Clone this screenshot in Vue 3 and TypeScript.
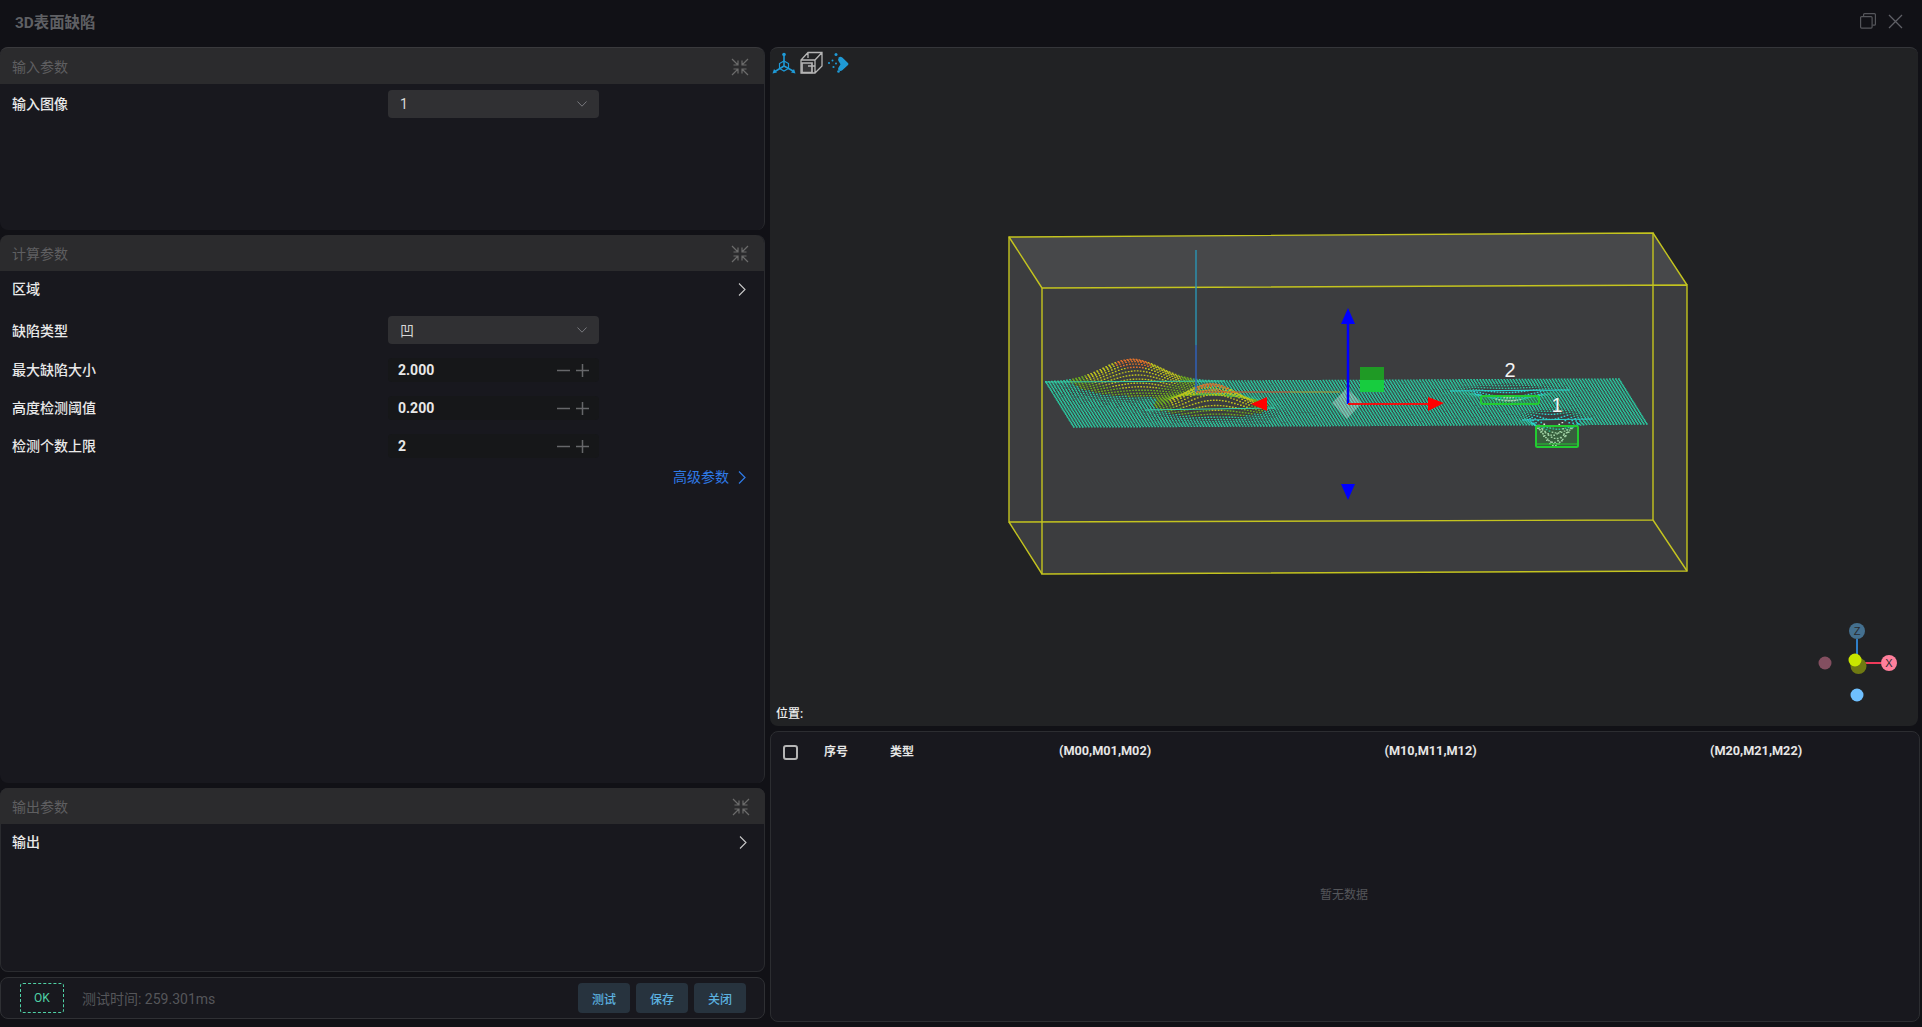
<script setup lang="ts">
type Row = { label: string; value: string };
const inputs: Row[] = [
  { label: '最大缺陷大小', value: '2.000' },
  { label: '高度检测阈值', value: '0.200' },
  { label: '检测个数上限', value: '2' },
];
const columns = ['(M00,M01,M02)', '(M10,M11,M12)', '(M20,M21,M22)'];

const g = (x: number, c: number, s: number) => Math.exp(-((x - c) * (x - c)) / (2 * s * s));
const bumps = [
  [0.15, 0.04, 0.05, 0.16, 23],
  [0.26, 0.6, 0.045, 0.11, 24],
  [0.845, 0.87, 0.02, 0.07, -27],
  [0.797, 0.25, 0.036, 0.05, -10],
];
const buckets: Record<string, string[]> = {
  '#2bc79f': [], '#6fb21e': [], '#bfc41c': [], '#e0702a': [], '#2bd6d0': [], '#dbe8dc': [],
};
const NU = 190;
const NV = 32;
for (let j = 0; j <= NV; j++) {
  for (let i = 0; i <= NU; i++) {
    const u = i / NU;
    const v = j / NV;
    let h = 0;
    for (const b of bumps) h += b[4] * g(u, b[0], b[2]) * g(v, b[1], b[3]);
    const x = 1045 + u * 573 + v * 28;
    const y = 382 - u * 3 + v * 45 - h;
    const col = h > 19 ? '#e0702a' : h > 6 ? '#bfc41c' : h > 2.2 ? '#6fb21e' : h > -2 ? '#2bc79f' : h > -8 ? '#2bd6d0' : '#dbe8dc';
    buckets[col].push(`M${x.toFixed(1)} ${y.toFixed(1)}h1.7`);
  }
}
const meshes = Object.keys(buckets).map((c) => ({ color: c, d: buckets[c].join('') }));
const COLLAPSE = 'M1 1l6 6M7 2.5V7H2.5M17 1l-6 6M11 2.5V7h4.5M1 17l6-6M7 15.5V11H2.5M17 17l-6-6M11 15.5V11h4.5';
const CHEV = 'M1 .5l6 6-6 6';
const DOWN = 'M.5 .5L5 5.2l4.5-4.7';
</script>

<template>
  <div class="app">
    <header class="titlebar">
      <span class="title">3D表面缺陷</span>
      <div class="winbtns">
        <svg width="16" height="16" viewBox="0 0 16 16" fill="none" stroke="#55565b" stroke-width="1.2"><rect x="0.6" y="3.6" width="11.5" height="11.5" rx="1" /><path d="M3.6 3.4V1.6q0-1 1-1h9.8q1 0 1 1v9.6q0 1-1 1h-2" /></svg>
        <svg width="15" height="15" viewBox="0 0 15 15" fill="none" stroke="#5f6066" stroke-width="1.3"><path d="M1 1l13 13M14 1L1 14" /></svg>
      </div>
    </header>

    <div class="main">
      <div class="left">
        <section class="panel p1">
          <div class="phead">
            <span>输入参数</span>
            <svg class="collapse" width="18" height="18" viewBox="0 0 18 18" fill="none" stroke="#6b6b6b" stroke-width="1.2"><path :d="COLLAPSE" /></svg>
          </div>
          <div class="formrow first">
            <label>输入图像</label>
            <div class="select"><span>1</span><svg width="10" height="6" viewBox="0 0 10 6" fill="none" stroke="#77787c"><path :d="DOWN" /></svg></div>
          </div>
        </section>

        <section class="panel p2">
          <div class="phead">
            <span>计算参数</span>
            <svg class="collapse" width="18" height="18" viewBox="0 0 18 18" fill="none" stroke="#6b6b6b" stroke-width="1.2"><path :d="COLLAPSE" /></svg>
          </div>
          <div class="linkrow">
            <label>区域</label>
            <svg width="8" height="13" viewBox="0 0 8 13" fill="none" stroke="#c8c8c8" stroke-width="1.1"><path :d="CHEV" /></svg>
          </div>
          <div class="formrow second">
            <label>缺陷类型</label>
            <div class="select"><span>凹</span><svg width="10" height="6" viewBox="0 0 10 6" fill="none" stroke="#77787c"><path :d="DOWN" /></svg></div>
          </div>
          <div v-for="r in inputs" :key="r.label" class="formrow inputrow">
            <label>{{ r.label }}</label>
            <div class="numinput">
              <span class="val">{{ r.value }}</span>
              <span class="steppers">
                <svg width="13" height="13" viewBox="0 0 13 13" stroke="#66676a" stroke-width="1.5"><path d="M0 6.5h13" /></svg>
                <svg width="13" height="13" viewBox="0 0 13 13" stroke="#66676a" stroke-width="1.5"><path d="M0 6.5h13M6.5 0v13" /></svg>
              </span>
            </div>
          </div>
          <div class="advanced">
            <span>高级参数</span>
            <svg width="8" height="13" viewBox="0 0 8 13" fill="none" stroke="#2f7be8" stroke-width="1.2"><path :d="CHEV" /></svg>
          </div>
        </section>

        <section class="panel p3">
          <div class="phead">
            <span>输出参数</span>
            <svg class="collapse" width="18" height="18" viewBox="0 0 18 18" fill="none" stroke="#6b6b6b" stroke-width="1.2"><path :d="COLLAPSE" /></svg>
          </div>
          <div class="linkrow">
            <label>输出</label>
            <svg width="8" height="13" viewBox="0 0 8 13" fill="none" stroke="#c8c8c8" stroke-width="1.1"><path :d="CHEV" /></svg>
          </div>
        </section>

        <footer class="statusbar">
          <div class="ok">OK</div>
          <span class="time">测试时间: 259.301ms</span>
          <div class="btns">
            <button>测试</button>
            <button>保存</button>
            <button>关闭</button>
          </div>
        </footer>
      </div>

      <div class="right">
        <section class="viewer">
          <svg class="scene" viewBox="770 47 1148 679" width="1148" height="679">
            <polygon points="1009,237 1653,233 1687,285 1687,571 1042,574 1009,522" fill="#3c3d3f" />
            <polygon points="1009,237 1653,233 1687,285 1042,288" fill="#47484a" />
            <g fill="none" stroke="#c4c41f" stroke-width="1.4">
              <path d="M1009 237L1653 233L1653 520L1009 522Z" />
              <path d="M1042 288L1687 285L1687 571L1042 574Z" />
              <path d="M1009 237L1042 288M1653 233L1687 285M1653 520L1687 571M1009 522L1042 574" />
            </g>
            <path v-for="m in meshes" :key="m.color" :d="m.d" :stroke="m.color" stroke-width="1.4" fill="none" />
            <path d="M1045 382L1225 381" stroke="#35d3ab" stroke-width="1.1" fill="none" />
            <path d="M1145 410L1275 408" stroke="#35d3ab" stroke-width="1.1" fill="none" />
            <path d="M1450 391L1570 390M1522 420L1592 419" stroke="#2bd6d0" stroke-width="1.1" fill="none" />
            <path d="M1196 250V345" stroke="#2a94b4" stroke-width="1.4" />
            <path d="M1196 345V392" stroke="#2f63c0" stroke-width="1.4" />
            <path d="M1196 392H1290" stroke="#e0502a" stroke-width="1.2" />
            <path d="M1290 392H1340" stroke="#b89a30" stroke-width="1.2" />
            <polygon points="1347,388 1362,403 1347,419 1332,403" fill="#fff" fill-opacity="0.3" />
            <rect x="1360" y="367" width="24" height="13" fill="#1f9a25" />
            <rect x="1360" y="380" width="24" height="12" fill="#17cc3f" />
            <path d="M1348 404V322" stroke="#0000ff" stroke-width="2.5" />
            <polygon points="1348,308 1341,324 1355,324" fill="#0000ff" />
            <polygon points="1341,484 1355,484 1348,500" fill="#0000ff" />
            <path d="M1348 404H1430" stroke="#f01010" stroke-width="2" />
            <polygon points="1444,403 1428,397 1428,411" fill="#ff0000" />
            <polygon points="1251,404 1267,397 1267,411" fill="#ff0000" />
            <rect x="1481" y="396" width="58" height="8" rx="2" fill="#2a9a3a" fill-opacity="0.3" stroke="#22cc30" stroke-width="2" />
            <rect x="1536" y="426" width="42" height="21" rx="1.5" fill="#2fa03a" fill-opacity="0.35" stroke="#22cc30" stroke-width="2" />
            <path d="M1537 444H1578" stroke="#22cc30" stroke-width="1.2" />
            <text x="1510" y="377" class="num">2</text>
            <text x="1557" y="412" class="num">1</text>
            <path d="M1857 639V656" stroke="#2f7fc8" stroke-width="2" />
            <path d="M1860 663H1881" stroke="#f03a5a" stroke-width="2" />
            <circle cx="1825" cy="663" r="6.5" fill="#834f60" />
            <circle cx="1857" cy="695" r="6.5" fill="#6fc0ff" />
            <circle cx="1858.5" cy="666" r="8" fill="#6f7a12" />
            <circle cx="1855" cy="660" r="6.5" fill="#c8e600" />
            <circle cx="1857" cy="631" r="8" fill="#44708f" />
            <circle cx="1889" cy="663" r="8" fill="#ff7f9b" />
            <text x="1857" y="635" class="axis">Z</text>
            <text x="1889" y="667" class="axis">X</text>
          </svg>

          <div class="tools">
            <svg width="24" height="24" viewBox="772 50 24 24" fill="none" stroke="#1f9ad6" stroke-width="1.6"><path d="M784 55V66L775 71.5M784 66l10 5.5" /><path d="M784 61l4.5 2.5v5L784 71l-4.5-2.5v-5z" stroke-width="1.2" /><circle cx="784" cy="54.5" r="1.8" fill="#1f9ad6" stroke="none" /><path d="M772.5 73.5l1.5-4.5 3 3.5zM795.5 73.5l-1.5-4.5-3 3.5z" fill="#1f9ad6" stroke="none" /></svg>
            <svg width="28" height="24" viewBox="796 50 28 24" fill="none" stroke="#b5b5b5" stroke-width="1.3"><path d="M808 52.5H822V66L815 73H801V60zM801 60H815V73M815 60L822 52.5M808 52.5V58M808 66H815" /><path d="M802 63H812V72.5H802z" stroke-width="1.7" fill="#b5b5b5" fill-opacity="0.12" /></svg>
            <svg width="24" height="24" viewBox="826 50 24 24" fill="#1f9ad6"><path d="M838.5 57.5q2-1.5 3.8 0L848 63q1 1 0 2l-5.7 5.3q-1.8 1.5-3.8 0-1-1.3 0-2.8l2-3.2-2-3.2q-1-1.3 0-2.6z" /><circle cx="829" cy="63" r="1.1" /><circle cx="836" cy="54.5" r="1.5" /><circle cx="832.5" cy="60.5" r="1" /><circle cx="833.5" cy="67" r="1.1" /><circle cx="836" cy="63.5" r="1" /><circle cx="838.5" cy="71.5" r="1.3" /></svg>
          </div>
          <div class="pos">位置:</div>
        </section>

        <section class="table">
          <div class="thead">
            <span class="check"></span>
            <span class="th idx">序号</span>
            <span class="th type">类型</span>
            <span v-for="c in columns" :key="c" class="th mat">{{ c }}</span>
          </div>
          <div class="empty">暂无数据</div>
        </section>
      </div>
    </div>
  </div>
</template>

<style>
html, body { margin: 0; padding: 0; background: #111116; overflow: hidden; }
</style>

<style scoped>
.app {
  width: 1922px;
  height: 1027px;
  background: #111116;
  display: flex;
  flex-direction: column;
  font-family: Roboto, "Noto Sans CJK SC", sans-serif;
  font-size: 14px;
  color: #e8e8e8;
}
.titlebar {
  height: 47px;
  flex: none;
  display: flex;
  align-items: center;
  justify-content: space-between;
  padding: 0 19px 5px 15px;
  box-sizing: border-box;
}
.title { font-size: 15.4px; font-weight: 700; color: #5f6064; }
.winbtns { display: flex; align-items: center; gap: 12px; }
.main { flex: 1; display: flex; gap: 5px; min-height: 0; }
.left { width: 765px; flex: none; display: flex; flex-direction: column; gap: 5px; }
.panel {
  background: #18181e;
  border-radius: 8px;
  box-shadow: inset 0 0 0 1px #2a2b2f;
  display: flex;
  flex-direction: column;
  box-sizing: border-box;
}
.p1 { height: 183px; box-shadow: none; border-right: 1px solid #2a2b2f; }
.p2 { height: 548px; box-shadow: none; border-right: 1px solid #2a2b2f; }
.p3 { height: 184px; }
.phead {
  height: 37px;
  flex: none;
  background: #2b2b2d;
  border-radius: 8px 8px 0 0;
  display: flex;
  align-items: center;
  justify-content: space-between;
  padding: 0 15px 0 12px;
  color: #5f5f61;
  border-top: 1px solid #3a3a3d;
  box-sizing: border-box;
}
.phead .collapse { margin-top: 2px; }
.p2 .phead, .p3 .phead { height: 36px; border-top: 0; }
label { font-weight: 500; color: #e9e9e9; margin-bottom: 2px; }
.formrow { display: flex; align-items: center; padding-left: 12px; }
.formrow label { width: 376px; flex: none; }
.second label { margin-bottom: 0; }
.first { margin-top: 6px; }
.second { margin-top: 9px; }
.select {
  width: 211px;
  height: 28px;
  background: #303033;
  border-radius: 4px;
  display: flex;
  align-items: center;
  justify-content: space-between;
  padding: 0 12px;
  box-sizing: border-box;
  color: #d8d8d8;
}
.inputrow { margin-top: 14px; }
.numinput {
  width: 211px;
  height: 24px;
  background: #161719;
  border-radius: 4px;
  display: flex;
  align-items: center;
  justify-content: space-between;
  padding: 0 10px;
  box-sizing: border-box;
}
.val { font-weight: 700; color: #e8e8e8; }
.inputrow:last-of-type .val { padding-left: 2px; }
.steppers { display: flex; gap: 6px; align-items: center; }
.linkrow {
  height: 36px;
  flex: none;
  display: flex;
  align-items: center;
  justify-content: space-between;
  padding: 0 18px 0 12px;
}
.advanced {
  margin-top: 9px;
  display: flex;
  justify-content: flex-end;
  align-items: center;
  gap: 9px;
  padding-right: 18px;
  color: #2f7be8;
  line-height: 20px;
}
.statusbar {
  height: 42px;
  flex: none;
  box-sizing: border-box;
  border: 1px solid #2f3034;
  border-radius: 8px;
  background: #18181e;
  display: flex;
  align-items: center;
  padding: 0 18px 0 19px;
}
.ok {
  width: 44px;
  height: 30px;
  box-sizing: border-box;
  border: 1px dashed #4fd1a5;
  border-radius: 3px;
  color: #4fd1a5;
  font-size: 12px;
  display: flex;
  align-items: center;
  justify-content: center;
}
.time { margin-left: 18px; color: #55565a; font-size: 14px; }
.btns { margin-left: auto; display: flex; gap: 6px; }
.btns button {
  width: 52px;
  height: 30px;
  border: 0;
  border-radius: 4px;
  background: #27333e;
  color: #5cb2e0;
  font: 500 12px Roboto, "Noto Sans CJK SC", sans-serif;
  padding: 0;
}
.right { width: 1148px; flex: none; display: flex; flex-direction: column; gap: 5px; }
.viewer {
  height: 679px;
  flex: none;
  position: relative;
  background: #212224;
  border-radius: 8px;
  border-top: 1px solid #35363a;
  box-sizing: border-box;
  overflow: hidden;
}
.scene { position: absolute; left: 0; top: -1px; }
.tools { position: absolute; left: 2px; top: 2px; display: flex; }
.tools svg { flex: none; }
.tools svg:nth-child(3) { margin-left: 2px; }
.pos { position: absolute; left: 6px; bottom: 5px; font-size: 12px; font-weight: 500; color: #eee; }
.num { font: 20px "Liberation Sans", sans-serif; fill: #f4f4f4; text-anchor: middle; }
.axis { font: 11px "Liberation Sans", sans-serif; fill: #2a2b2e; text-anchor: middle; }
.table {
  height: 291px;
  width: 1150px;
  flex: none;
  box-sizing: border-box;
  border: 1px solid #2c2d31;
  border-radius: 8px;
  background: #18181e;
  display: flex;
  flex-direction: column;
  overflow: hidden;
}
.thead { height: 38px; flex: none; display: flex; align-items: center; padding-left: 12px; }
.check {
  width: 15px;
  height: 15px;
  box-sizing: border-box;
  border: 2px solid #b5b5b5;
  border-radius: 3px;
  flex: none;
  margin-top: 2px;
}
.th { font-size: 12.7px; font-weight: 700; color: #e6e6e6; flex: none; margin-bottom: 2px; }
.idx { margin-left: 26px; width: 66px; font-size: 12px; }
.type { width: 169px; font-size: 12px; }
.mat { width: 325.5px; }
.empty {
  flex: 1;
  display: flex;
  align-items: center;
  justify-content: center;
  color: #55565a;
  font-size: 12px;
  padding-bottom: 4px;
  margin-left: -2px;
}
</style>
